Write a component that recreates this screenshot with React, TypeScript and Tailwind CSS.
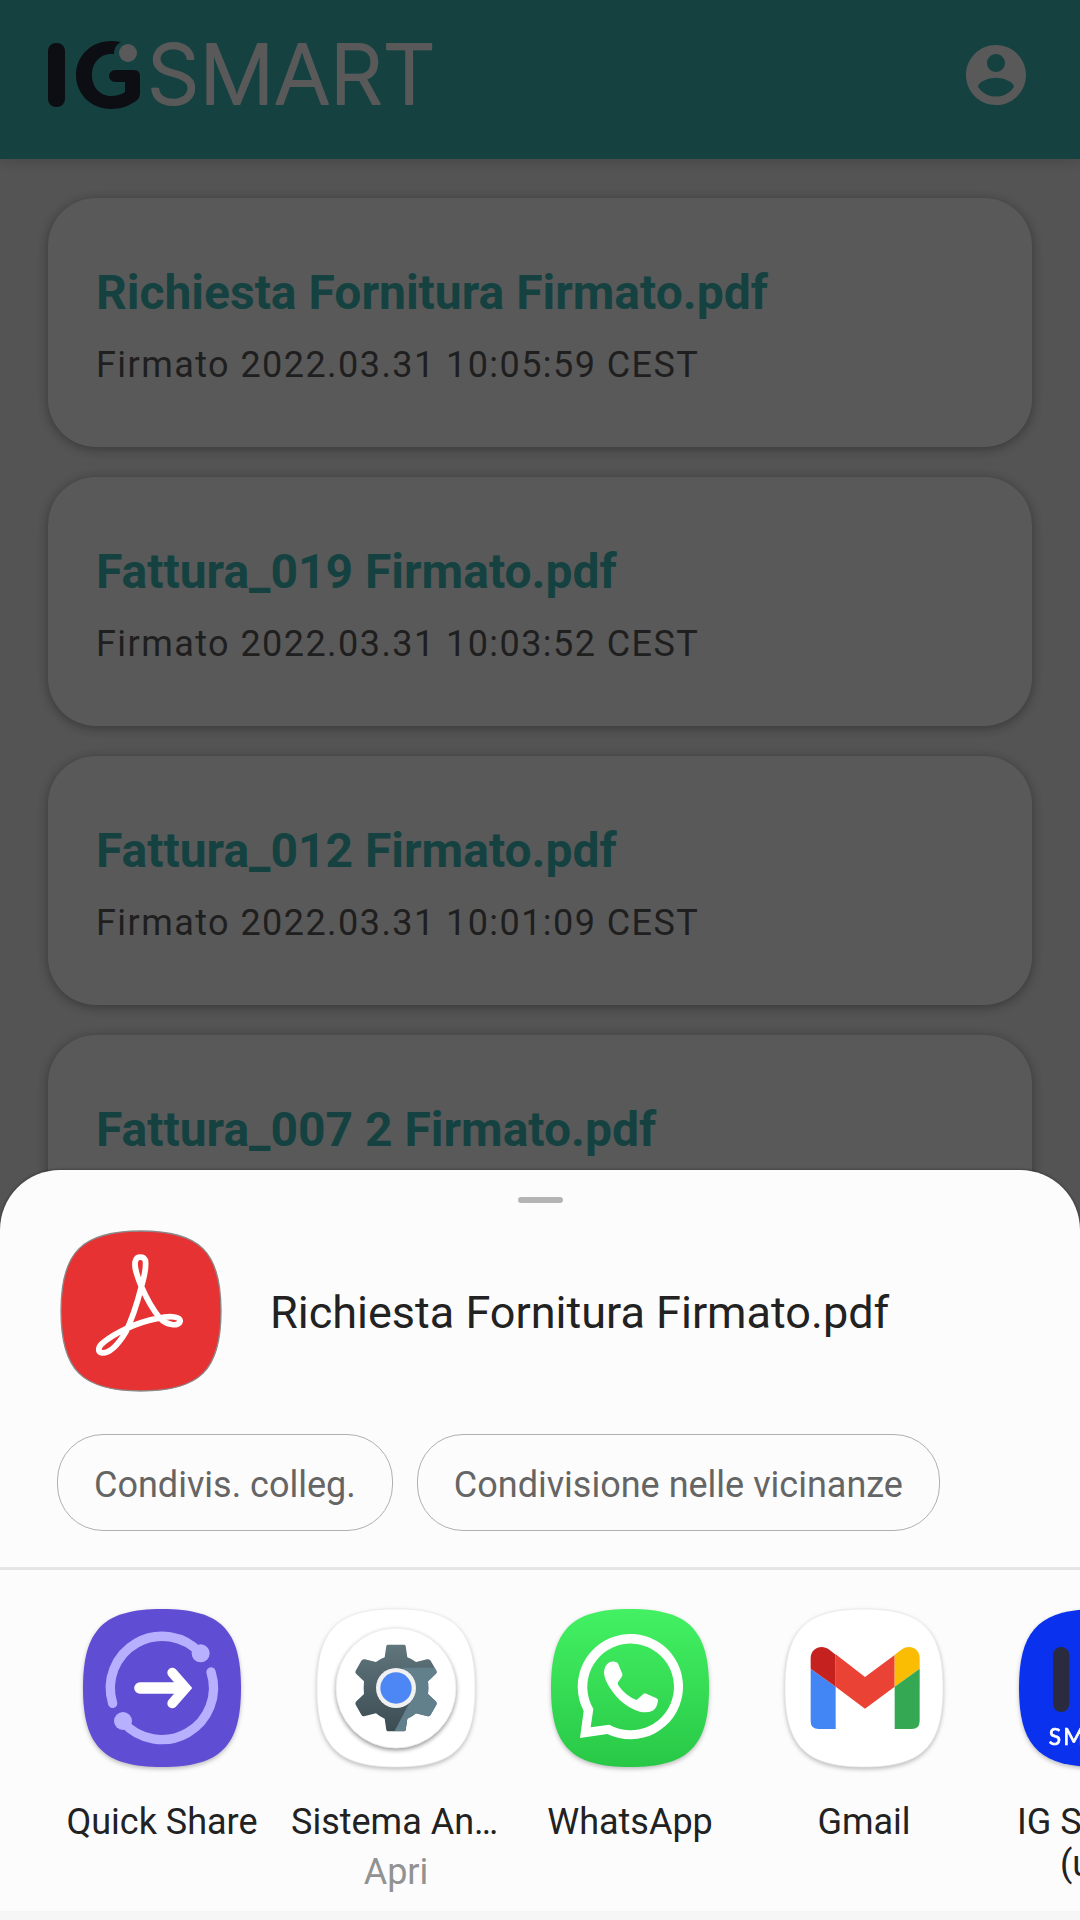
import React from 'react';

const FILES = [
  { name: 'Richiesta Fornitura Firmato.pdf', signed: 'Firmato 2022.03.31 10:05:59 CEST' },
  { name: 'Fattura_019 Firmato.pdf', signed: 'Firmato 2022.03.31 10:03:52 CEST' },
  { name: 'Fattura_012 Firmato.pdf', signed: 'Firmato 2022.03.31 10:01:09 CEST' },
  { name: 'Fattura_007 2 Firmato.pdf', signed: 'Firmato 2022.03.31 09:58:41 CEST' },
];

const CHIPS = ['Condivis. colleg.', 'Condivisione nelle vicinanze'];

// Rounded app tile, centered on 0,0
const TILE = 'M0 -237C175 -237 237 -175 237 0S175 237 0 237S-237 175 -237 0S-175 -237 0 -237Z';

const GEAR =
  'M-24 -130H24Q28 -130 29 -126L34 -92Q48 -87 60 -78L93 -86Q100 -88 104 -82L121 -52Q124 -46 119 -42L96 -20Q98 0 96 18L119 40Q124 45 121 50L104 80Q100 87 93 84L60 76Q48 87 34 92L29 126Q28 130 24 130H-24Q-28 130 -29 126L-34 92Q-48 87 -60 76L-93 84Q-100 87 -104 80L-121 50Q-124 45 -119 40L-96 18Q-98 0 -96 -20L-119 -42Q-124 -46 -121 -52L-104 -82Q-100 -88 -93 -86L-60 -78Q-48 -87 -34 -92L-29 -126Q-28 -130 -24 -130Z';

const Logo = () => (
  <svg viewBox="0 0 396 72" className="h-[72px] w-[396px] overflow-visible" role="img" aria-label="IG SMART">
    <rect x="0" y="4" width="17" height="64" rx="8" fill="#25273a" />
    <path
      d="M73 3C69 2 66 2 63 2C43 2 28 17 28 36S43 70 63 70C73 70 81 67 88 62Q92 59 92 54V37Q92 31 86 31H67A6 6 0 0 0 67 43H77V53Q71 57 63 57C52 57 44 48 44 36S52 15 63 15H66C66 9 69 5 73 3Z"
      fill="#25273a"
    />
    <circle cx="80" cy="14" r="9" fill="#fff" />
    <text x="99" y="65" fill="#fff" stroke="#fff" strokeWidth="2" strokeLinejoin="round" fontSize="83" className="font-['Inter'] font-light">SMART</text>
  </svg>
);

const Tile = ({ children, fill, stroke }: { children?: React.ReactNode; fill: string; stroke?: string }) => (
  <svg viewBox="-237 -237 474 474" className="size-[158px] overflow-visible drop-shadow-[0_2px_2px_rgba(0,0,0,0.25)]" aria-hidden="true">
    <path d={TILE} fill={fill} stroke={stroke} strokeWidth="2" />
    {children}
  </svg>
);

const AcrobatIcon = () => (
  <svg viewBox="-240 -240 480 480" className="size-[162px] shrink-0" aria-hidden="true">
    <path d={TILE} fill="#e63232" stroke="#8a8a8a" strokeWidth="4" />
    <path
      d="M0 -75C-14 -110 -22 -135 -16 -150C-12 -163 8 -163 13 -150C17 -125 8 -95 0 -68C-12 -20 -25 20 -45 62C-65 95 -90 125 -115 124C-130 121 -128 105 -110 92C-80 68 -20 35 50 22C90 12 118 18 116 30C112 48 75 42 55 20C30 -10 15 -40 0 -75Z"
      fill="none"
      stroke="#fff"
      strokeWidth="17"
      strokeLinejoin="round"
    />
  </svg>
);

const QuickShareIcon = () => (
  <Tile fill="#5f4dd3">
    <g fill="none" stroke="#b7b0ff" strokeWidth="28" strokeLinecap="round">
      <path d="M-148 46A155 155 0 0 1 115 -104" />
      <path d="M147 -48A155 155 0 0 1 -117 102" />
    </g>
    <circle cx="116" cy="-104" r="27" fill="#b7b0ff" />
    <circle cx="-117" cy="99" r="27" fill="#b7b0ff" />
    <path d="M-66 0H60" stroke="#fff" strokeWidth="35" strokeLinecap="round" />
    <path d="M31 -46L71 0L31 46" fill="none" stroke="#fff" strokeWidth="30" strokeLinecap="round" />
  </Tile>
);

const SystemIcon = () => (
  <Tile fill="#fff" stroke="#e9e9e9">
    <defs>
      <linearGradient id="gear" x1="0" y1="0" x2="0" y2="1">
        <stop offset="0%" stopColor="#60757c" />
        <stop offset="100%" stopColor="#3c4c53" />
      </linearGradient>
      <clipPath id="gearClip">
        <path d={GEAR} />
      </clipPath>
    </defs>
    <circle r="180" fill="#fff" stroke="#ececec" strokeWidth="3" className="drop-shadow-[0_6px_6px_rgba(0,0,0,0.4)]" />
    <path d={GEAR} fill="url(#gear)" />
    <path d="M20 -61H130V140H-10L40 45Z" fill="#627f8c" clipPath="url(#gearClip)" />
    <circle r="60" fill="#f1f1f1" />
    <circle r="47" fill="#4d87f5" />
  </Tile>
);

const WhatsAppIcon = () => (
  <Tile fill="url(#wa)">
    <defs>
      <linearGradient id="wa" x1="0" y1="0" x2="0" y2="1">
        <stop offset="0%" stopColor="#43f163" />
        <stop offset="100%" stopColor="#28c846" />
      </linearGradient>
    </defs>
    <g transform="translate(-300 -295)" fill="#fff">
      <path
        fillRule="evenodd"
        d="M150 445L161 364A158 158 0 1 1 232 433ZM190 358L182 413L238 405A130 130 0 1 0 190 358Z"
      />
      <path d="M236 219Q248 213 260 218Q264 220 266 226L277 253Q278 258 275 262L264 278Q262 283 266 288Q286 318 320 331L340 313Q344 309 349 312L378 325Q384 328 384 332Q382 355 368 363Q350 371 330 366Q275 350 240 295Q222 268 222 248Q223 229 236 219Z" />
    </g>
  </Tile>
);

const GmailIcon = () => (
  <Tile fill="#fff" stroke="#e4e4e4">
    <g transform="translate(-312 -295)">
      <path d="M152 237L227 291V418H176Q152 418 152 394Z" fill="#4285f4" />
      <path d="M152 237V205C152 175 185 162 208 180L227 195V291Z" fill="#c5221f" />
      <path d="M227 194L315 262L404 196V291L315 357L227 291Z" fill="#ea4335" />
      <path d="M404 195L424 180C450 162 479 178 479 205V237L404 291Z" fill="#fbbc04" />
      <path d="M404 291L479 237V394Q479 418 455 418H404Z" fill="#34a853" />
    </g>
  </Tile>
);

const IgSmartIcon = () => (
  <Tile fill="#0a32ee">
    <rect x="-135" y="-123" width="49" height="195" rx="24" fill="#2b2b3f" />
    <text x="-148" y="170" fill="#fff" stroke="#fff" strokeWidth="2" fontSize="68" className="font-['Lato'] tracking-widest">SMART</text>
  </Tile>
);

const TARGETS = [
  { label: 'Quick Share', icon: <QuickShareIcon /> },
  { label: 'Sistema Android', hint: 'Apri', icon: <SystemIcon /> },
  { label: 'WhatsApp', icon: <WhatsAppIcon /> },
  { label: 'Gmail', icon: <GmailIcon /> },
  { label: 'IG SMART (uat)', icon: <IgSmartIcon />, wrap: true },
];

const ShareSheet = () => (
  <section className="absolute inset-x-0 bottom-0 overflow-hidden rounded-t-[60px] bg-[#fcfcfc] shadow-[0_0_3px_rgba(0,0,0,0.5)]">
    <div className="mx-auto mt-[27px] h-1.5 w-[45px] rounded-full bg-[#b4b4b4]" />

    <div className="mt-[27px] flex items-center gap-12 px-[60px]">
      <AcrobatIcon />
      <h2 className="pt-1 text-[45px] leading-[52px] text-[#222222]">Richiesta Fornitura Firmato.pdf</h2>
    </div>

    <div className="mt-[42px] flex gap-6 px-[57px]">
      {CHIPS.map((chip) => (
        <button key={chip} className="h-[97px] rounded-[46px] border border-[#b0b0b0] px-9 pt-1 text-[36px] leading-[42px] whitespace-nowrap text-[#656565]">
          {chip}
        </button>
      ))}
    </div>

    <div className="mt-9 flex overflow-hidden border-t-[3px] border-[#e5e5e5] px-[45px] pt-[39px] pb-[18px]">
      {TARGETS.map((target) => (
        <button key={target.label} className="flex w-[234px] shrink-0 flex-col items-center px-3 text-[36px] leading-[42px]">
          {target.icon}
          <span className={target.wrap ? 'mt-[34px] text-[#222222]' : 'mt-[34px] w-full truncate text-[#222222]'}>{target.label}</span>
          {target.hint && <span className="mt-2 text-[#929292]">{target.hint}</span>}
        </button>
      ))}
    </div>
    <div className="h-[9px] bg-[#f6f6f6]" />
  </section>
);

export default function App() {
  return (
    <div className="relative h-screen overflow-hidden bg-[#f0f0f0] font-['Roboto',sans-serif]">
      <header className="relative flex items-center justify-between bg-[#3cbdb7] px-12 pt-[39px] pb-12 shadow-[0_3px_12px_rgba(0,0,0,0.15)]">
        <Logo />
        <button aria-label="Account">
          <svg viewBox="0 0 24 24" fill="#fff" className="size-[72px]">
            <path d="M12 2C6.48 2 2 6.48 2 12s4.48 10 10 10 10-4.48 10-10S17.52 2 12 2zm0 3c1.66 0 3 1.34 3 3s-1.34 3-3 3-3-1.34-3-3 1.34-3 3-3zm0 14.2c-2.5 0-4.71-1.28-6-3.22.03-1.99 4-3.08 6-3.08 1.99 0 5.97 1.09 6 3.08-1.29 1.94-3.5 3.22-6 3.22z" />
          </svg>
        </button>
      </header>

      <main className="flex flex-col gap-[30px] px-12 pt-[39px]">
        {FILES.map((file) => (
          <article key={file.name} className="rounded-[48px] bg-white px-12 pt-[67px] pb-[61px] shadow-[0_2px_12px_rgba(0,0,0,0.35)]">
            <h3 className="text-[48px] leading-[56px] font-bold text-[#3cbdb7]">{file.name}</h3>
            <p className="mt-[23px] text-[36px] leading-[42px] tracking-[0.04em] text-[#5b5b5b]">{file.signed}</p>
          </article>
        ))}
      </main>

      {/* Scrim */}
      <div className="absolute inset-0 bg-black/65" />
      <ShareSheet />
    </div>
  );
}
